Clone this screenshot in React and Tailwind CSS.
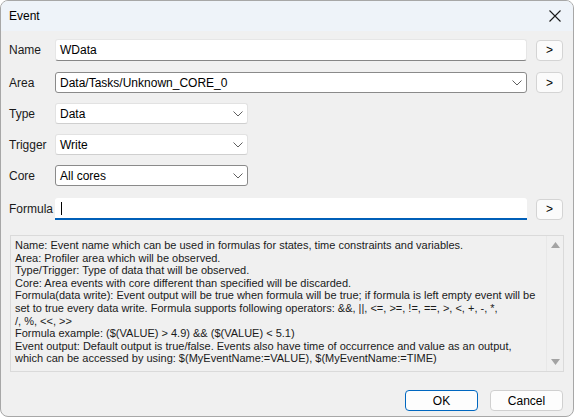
import React from 'react';

const font = { fontFamily: '"Segoe UI", "Liberation Sans", Arial, sans-serif' };

const Chevron = () => (
  <svg width="10" height="6" viewBox="0 0 10 6" className="shrink-0">
    <path d="M0.5 0.5 L5 5 L9.5 0.5" fill="none" stroke="#5f5f5f" strokeWidth="1" />
  </svg>
);

const ArrowButton = () => (
  <button className="w-[27px] h-[21px] ml-[9px] shrink-0 rounded-[4px] border border-[#d4d4d4] bg-[#fbfbfb] text-[12px] leading-none text-black flex items-center justify-center">
    &gt;
  </button>
);

const Label = ({ children }) => (
  <div className="w-[54px] shrink-0 pl-[8px] text-[12px] text-[#1a1a1a]">{children}</div>
);

const Combo = ({ value, wide, dark }) => (
  <div
    className={`h-[21px] rounded-[3px] bg-white flex items-center justify-between pl-[4px] pr-[4px] text-[12px] text-black border ${
      dark ? 'border-[#8a8a8a]' : 'border-[#e2e2e2] border-b-[#cfcfcf]'
    } ${wide ? 'w-[472px]' : 'w-[193px]'}`}
  >
    <span>{value}</span>
    <Chevron />
  </div>
);

const helpLines = [
  'Name: Event name which can be used in formulas for states, time constraints and variables.',
  'Area: Profiler area which will be observed.',
  'Type/Trigger: Type of data that will be observed.',
  'Core: Area events with core different than specified will be discarded.',
  'Formula(data write): Event output will be true when formula will be true; if formula is left empty event will be',
  'set to true every data write. Formula supports following operators: &&, ||, <=, >=, !=, ==, >, <, +, -, *,',
  '/, %, <<, >>',
  'Formula example: ($(VALUE) > 4.9) && ($(VALUE) < 5.1)',
  'Event output: Default output is true/false. Events also have time of occurrence and value as an output,',
  'which can be accessed by using: $(MyEventName:=VALUE), $(MyEventName:=TIME)',
];

export default function App() {
  return (
    <div style={font} className="w-[574px] h-[417px] bg-white">
      <div className="w-[574px] h-[417px] border border-[#a7a7a7] rounded-[8px] overflow-hidden bg-[#f0f0f0] flex flex-col">
        {/* Title bar */}
        <div className="h-[30px] shrink-0 bg-[#eef3f9] flex items-center justify-between pl-[8px] pr-[12px]">
          <span className="text-[12px] text-black">Event</span>
          <svg width="12" height="12" viewBox="0 0 12 12">
            <path d="M0.5 0.5 L11.5 11.5 M11.5 0.5 L0.5 11.5" stroke="#1a1a1a" strokeWidth="1.1" />
          </svg>
        </div>

        {/* Name */}
        <div className="flex items-center mt-[8px]">
          <Label>Name</Label>
          <div className="w-[472px] h-[22px] rounded-[3px] bg-white border border-[#e6e6e6] border-b-[#868686] flex items-center pl-[4px] text-[12px] text-black">
            WData
          </div>
          <ArrowButton />
        </div>

        {/* Area */}
        <div className="flex items-center mt-[11px]">
          <Label>Area</Label>
          <Combo value="Data/Tasks/Unknown_CORE_0" wide dark />
          <ArrowButton />
        </div>

        {/* Type */}
        <div className="flex items-center mt-[10px]">
          <Label>Type</Label>
          <Combo value="Data" />
        </div>

        {/* Trigger */}
        <div className="flex items-center mt-[10px]">
          <Label>Trigger</Label>
          <Combo value="Write" />
        </div>

        {/* Core */}
        <div className="flex items-center mt-[10px]">
          <Label>Core</Label>
          <Combo value="All cores" dark />
        </div>

        {/* Formula */}
        <div className="flex items-center mt-[12px]">
          <Label>Formula</Label>
          <div className="w-[472px] h-[22px] rounded-t-[3px] bg-white border-b-2 border-[#005fb8] flex items-center pl-[6px]">
            <div className="w-px h-[13px] bg-black" />
          </div>
          <ArrowButton />
        </div>

        {/* Help text */}
        <div className="mx-[9px] mt-[15px] h-[137px] border border-[#dadada] flex">
          <div className="flex-1 pl-[4px] pt-[3px] text-[11px] leading-[12.6px] text-[#1a1a1a] whitespace-pre">
            {helpLines.map((l, i) => (
              <div key={i}>{l}</div>
            ))}
          </div>
          <div className="w-[17px] flex flex-col items-center justify-between py-[6px] border-l border-[#e8e8e8]">
            <svg width="9" height="6" viewBox="0 0 9 6">
              <path d="M0 6 L4.5 0 L9 6 Z" fill="#a3a3a3" />
            </svg>
            <svg width="9" height="6" viewBox="0 0 9 6">
              <path d="M0 0 L4.5 6 L9 0 Z" fill="#a3a3a3" />
            </svg>
          </div>
        </div>

        {/* Buttons */}
        <div className="flex justify-end gap-[12px] pr-[10px] mt-[18px]">
          <button className="w-[73px] h-[21px] rounded-[4px] border border-[#0067c0] bg-[#fdfdfd] text-[12px] text-black">
            OK
          </button>
          <button className="w-[73px] h-[21px] rounded-[4px] border border-[#d0d0d0] bg-[#fdfdfd] text-[12px] text-black">
            Cancel
          </button>
        </div>
      </div>
    </div>
  );
}
